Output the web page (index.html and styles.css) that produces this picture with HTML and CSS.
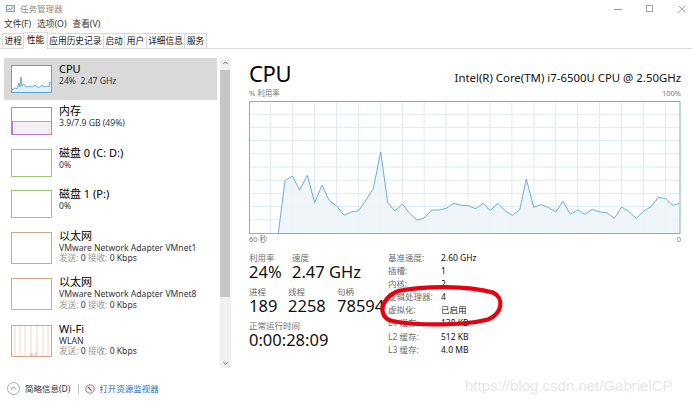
FILE: index.html
```html
<!DOCTYPE html>
<html lang="zh-CN">
<head>
<meta charset="utf-8">
<title>任务管理器</title>
<link rel="stylesheet" href="styles.css">
</head>
<body>
<div class="window">
  <div class="titlebar">
    <svg class="app-icon" viewBox="0 0 9 8"><rect x="0.5" y="0.5" width="8" height="6" fill="#e8eef4" stroke="#8aa0b4"/><path d="M1.5 5 3 3.5 4.5 4.5 7.5 2" fill="none" stroke="#4f86b8" stroke-width="0.9"/></svg>
    <span class="title">任务管理器</span>
    <div class="controls">
      <svg class="ctl min" viewBox="0 0 8 8"><path d="M0 4.5H8" stroke="#9a9a9a" stroke-width="1"/></svg>
      <svg class="ctl max" viewBox="0 0 8 8"><rect x="0.5" y="0.5" width="7" height="7" fill="none" stroke="#9a9a9a"/></svg>
      <svg class="ctl close" viewBox="0 0 8 8"><path d="M0.5 0.5 7.5 7.5M7.5 0.5 0.5 7.5" stroke="#9a9a9a" stroke-width="0.9"/></svg>
    </div>
  </div>

  <div class="menubar">
    <span>文件(F)</span><span>选项(O)</span><span>查看(V)</span>
  </div>

  <div class="tabs">
    <span class="tab">进程</span>
    <span class="tab active">性能</span>
    <span class="tab">应用历史记录</span>
    <span class="tab">启动</span>
    <span class="tab">用户</span>
    <span class="tab">详细信息</span>
    <span class="tab">服务</span>
  </div>

  <div class="main">
    <div class="sidebar">
      <div class="list">
        <div class="item selected">
          <div class="thumb cpu">
            <svg viewBox="0 0 39 26" preserveAspectRatio="none"><polygon points="0,24 3,22 5,23 7,17 8,21 9,11 10,20 12,18 14,21 17,20 20,21 23,19 25,21 28,21 30,19 32,21 35,20 37,21 38,16 39,17 39,26 0,26" fill="#e3eff9"/><polyline points="0,24 3,22 5,23 7,17 8,21 9,11 10,20 12,18 14,21 17,20 20,21 23,19 25,21 28,21 30,19 32,21 35,20 37,21 38,16 39,17" fill="none" stroke="#4a9bd6" stroke-width="0.8"/></svg>
          </div>
          <div class="text"><div class="name">CPU</div><div class="sub">24%&nbsp; 2.47 GHz</div></div>
        </div>
        <div class="item">
          <div class="thumb mem"><div class="mem-fill"></div></div>
          <div class="text"><div class="name">内存</div><div class="sub">3.9/7.9 GB (49%)</div></div>
        </div>
        <div class="item">
          <div class="thumb disk"></div>
          <div class="text"><div class="name">磁盘 0 (C: D:)</div><div class="sub">0%</div></div>
        </div>
        <div class="item">
          <div class="thumb disk"></div>
          <div class="text"><div class="name">磁盘 1 (P:)</div><div class="sub">0%</div></div>
        </div>
        <div class="item tall">
          <div class="thumb eth"></div>
          <div class="text"><div class="name">以太网</div><div class="sub">VMware Network Adapter VMnet1</div><div class="sub"><span class="k">发送:</span> 0 <span class="k">接收:</span> 0 Kbps</div></div>
        </div>
        <div class="item tall">
          <div class="thumb eth"></div>
          <div class="text"><div class="name">以太网</div><div class="sub">VMware Network Adapter VMnet8</div><div class="sub"><span class="k">发送:</span> 0 <span class="k">接收:</span> 0 Kbps</div></div>
        </div>
        <div class="item tall">
          <div class="thumb wifi">
            <svg viewBox="0 0 39 30" preserveAspectRatio="none"><path d="M3 0V30M8 0V30M13 0V30M19 0V30M25 0V30M31 0V30M36 0V30" stroke="#f2cbb8" stroke-width="0.8"/><path d="M19 30V27M21 30V28M24 30V26.5" stroke="#d9a080" stroke-width="0.8"/></svg>
          </div>
          <div class="text"><div class="name">Wi-Fi</div><div class="sub">WLAN</div><div class="sub"><span class="k">发送:</span> 0 <span class="k">接收:</span> 0 Kbps</div></div>
        </div>
        <div class="item">
          <div class="thumb gpu"></div>
          <div class="text"><div class="name">GPU 0</div></div>
        </div>
      </div>
      <div class="scrollbar">
        <svg class="arrow" viewBox="0 0 11 10"><path d="M3.3 6 5.5 3.8 7.7 6" fill="none" stroke="#606060" stroke-width="0.9"/></svg>
        <div class="track"><div class="bar"></div></div>
        <svg class="arrow" viewBox="0 0 11 10"><path d="M3.3 4 5.5 6.2 7.7 4" fill="none" stroke="#606060" stroke-width="0.9"/></svg>
      </div>
    </div>

    <div class="detail">
      <div class="head">
        <div class="big">CPU</div>
        <div class="model">Intel(R) Core(TM) i7-6500U CPU @ 2.50GHz</div>
      </div>
      <div class="axis"><span>% 利用率</span><span>100%</span></div>
      <svg class="chart" width="432" height="133" viewBox="250 101 432 133">
        <path d="M271.7 101V234M293.6 101V234M315.6 101V234M337.5 101V234M359.4 101V234M381.4 101V234M403.3 101V234M425.2 101V234M447.1 101V234M469.1 101V234M491 101V234M512.9 101V234M534.9 101V234M556.8 101V234M578.7 101V234M600.6 101V234M622.6 101V234M644.5 101V234M666.4 101V234M250 114.2H681M250 127.4H681M250 140.6H681M250 153.8H681M250 167H681M250 180.2H681M250 193.4H681M250 206.6H681M250 219.8H681" stroke="#dcebf5" stroke-width="1"/>
        <polygon fill="#eef4f9" fill-opacity="0.9" points="279.3,233.3 286,180.7 293.3,176 300.7,190 308.3,175.3 315.7,202.7 323,185 330.3,200.7 337.7,206 345,215.3 352.3,212 359.7,210.7 367,200 374.3,188.7 381.7,152 388.7,202.7 396,211 403.3,204 410.7,213.3 418,220 425.3,218 432.7,210 440,210 447.3,208.3 454.7,203.3 462,205.3 469.3,205.7 476.7,208.7 484,203.3 491.3,210.7 498.7,203.3 506,210.7 513.3,215.3 520.7,210 527.3,179 534.7,207.3 542,204.7 549.3,207.3 556.7,212 564,201.3 571.3,214.3 578.7,210 586,214.3 593.3,209.3 600.7,212 608,212.7 615.3,218.3 622.7,207 630,211.7 637.3,218.3 644.7,211 652,206.7 659.3,197.3 666.7,198.7 674,205.3 680.7,203.3 680.7,233 279.3,233"/>
        <polyline fill="none" stroke="#5aa6da" stroke-width="0.9" points="279.3,233.3 286,180.7 293.3,176 300.7,190 308.3,175.3 315.7,202.7 323,185 330.3,200.7 337.7,206 345,215.3 352.3,212 359.7,210.7 367,200 374.3,188.7 381.7,152 388.7,202.7 396,211 403.3,204 410.7,213.3 418,220 425.3,218 432.7,210 440,210 447.3,208.3 454.7,203.3 462,205.3 469.3,205.7 476.7,208.7 484,203.3 491.3,210.7 498.7,203.3 506,210.7 513.3,215.3 520.7,210 527.3,179 534.7,207.3 542,204.7 549.3,207.3 556.7,212 564,201.3 571.3,214.3 578.7,210 586,214.3 593.3,209.3 600.7,212 608,212.7 615.3,218.3 622.7,207 630,211.7 637.3,218.3 644.7,211 652,206.7 659.3,197.3 666.7,198.7 674,205.3 680.7,203.3"/>
        <rect x="250.5" y="101.5" width="430.5" height="132" fill="none" stroke="#74b1de" stroke-width="1"/>
      </svg>
      <div class="axis bottom"><span>60 秒</span><span>0</span></div>

      <div class="stats">
        <div class="left-stats">
          <div class="srow">
            <div class="stat c1"><div class="lbl">利用率</div><div class="val">24%</div></div>
            <div class="stat"><div class="lbl">速度</div><div class="val">2.47 GHz</div></div>
          </div>
          <div class="srow">
            <div class="stat c2"><div class="lbl">进程</div><div class="val">189</div></div>
            <div class="stat c3"><div class="lbl">线程</div><div class="val">2258</div></div>
            <div class="stat"><div class="lbl">句柄</div><div class="val">78594</div></div>
          </div>
          <div class="srow">
            <div class="stat"><div class="lbl">正常运行时间</div><div class="val">0:00:28:09</div></div>
          </div>
        </div>
        <div class="spec">
          <span class="sk">基准速度:</span><span class="sv">2.60 GHz</span>
          <span class="sk">插槽:</span><span class="sv">1</span>
          <span class="sk">内核:</span><span class="sv">2</span>
          <span class="sk">逻辑处理器:</span><span class="sv">4</span>
          <span class="sk">虚拟化:</span><span class="sv">已启用</span>
          <span class="sk">L1 缓存:</span><span class="sv">128 KB</span>
          <span class="sk">L2 缓存:</span><span class="sv">512 KB</span>
          <span class="sk">L3 缓存:</span><span class="sv">4.0 MB</span>
        </div>
      </div>
    </div>
  </div>

  <div class="footer">
    <svg class="fold" viewBox="0 0 13 13"><circle cx="6.5" cy="6.5" r="6" fill="none" stroke="#a0a0a0" stroke-width="0.9"/><path d="M3.9 7.6 6.5 5 9.1 7.6" fill="none" stroke="#808080" stroke-width="0.9"/></svg>
    <span class="brief">简略信息(D)</span>
    <span class="sep"></span>
    <svg class="monitor" viewBox="0 0 10 10"><circle cx="5" cy="5" r="4.3" fill="#e6e6e6" stroke="#8a8a8a" stroke-width="0.9"/><circle cx="5" cy="5" r="2.6" fill="#fafafa"/><path d="M3 3 6.6 6.6" stroke="#d0302a" stroke-width="1.1"/></svg>
    <span class="link">打开资源监视器</span>
  </div>

  <svg class="annot" width="692" height="403" viewBox="0 0 692 403">
    <path d="M398 291 C425 285.5 468 285.5 493 292.5 C504 297.5 503 313 488 319.5 C462 326 418 325.5 394 321.5 C380 319 380.5 306 386.5 299.5 C389 296 392 293.5 397 291.5" fill="none" stroke="#e80010" stroke-width="4.2" stroke-linecap="round"/>
  </svg>
  <div class="watermark">https://blog.csdn.net/GabrielCP</div>
</div>
</body>
</html>
```

FILE: styles.css
```css
* {
  box-sizing: border-box;
  margin: 0;
  padding: 0;
}

html, body {
  width: 692px;
  height: 403px;
  overflow: hidden;
  background: #fff;
}

body {
  font-family: "Noto Sans", "Noto Sans CJK SC", sans-serif;
  color: #000;
}

.window {
  position: relative;
  width: 692px;
  height: 403px;
}

/* title bar */
.titlebar {
  height: 17px;
  display: flex;
  align-items: center;
  padding-left: 6px;
}

.app-icon {
  width: 9px;
  height: 8px;
  margin-right: 5px;
}

.title {
  font-size: 8.5px;
  line-height: 17px;
  color: #8c8c8c;
}

.controls {
  margin-left: auto;
  display: flex;
  align-items: center;
  padding-right: 6px;
}

.ctl {
  display: block;
  width: 8px;
  height: 8px;
}

.ctl.min { margin-right: 24px; }
.ctl.max { width: 7px; height: 7px; margin-right: 25px; }

/* menu */
.menubar {
  height: 15px;
  display: flex;
  gap: 6px;
  padding-left: 4px;
  font-size: 8.7px;
  line-height: 15px;
  color: #333;
}

/* tabs */
.tabs {
  height: 17px;
  display: flex;
  align-items: flex-end;
  padding-left: 2px;
  border-bottom: 1px solid #dadada;
}

.tab {
  height: 15px;
  padding: 0 1.5px;
  margin-right: -1px;
  border: 1px solid #dadada;
  border-bottom: none;
  background: #fff;
  font-size: 8.7px;
  line-height: 14px;
  color: #111;
  position: relative;
}

.tab.active {
  height: 17px;
  margin-bottom: -1px;
  padding: 0 2.5px;
  line-height: 15px;
  z-index: 1;
}

/* main */
.main {
  height: 323px;
  display: flex;
}

.sidebar {
  width: 240px;
  display: flex;
  padding-top: 9px;
}

.list {
  width: 213px;
  height: 312px;
  margin-left: 4px;
  overflow: hidden;
}

.item {
  height: 41.5px;
  display: flex;
  padding-top: 4px;
}

.item:first-child {
  height: 42px;
}

.item.tall {
  height: 46.5px;
}

.item.selected {
  background: #d9d9d9;
}

.thumb {
  width: 41px;
  height: 28px;
  margin: 3px 7px 0 7px;
  border: 1px solid #ccc;
  background: #fff;
  flex: none;
  position: relative;
  overflow: hidden;
}

.tall .thumb {
  height: 32px;
}

.thumb svg {
  display: block;
  width: 100%;
  height: 100%;
}

.thumb.cpu { border-color: #5aa4da; }
.thumb.mem { border-color: #c07ad6; }
.thumb.disk { border-color: #95cb74; }
.thumb.eth { border-color: #d6a582; }
.thumb.wifi { border-color: #dba283; }
.thumb.gpu { border-color: #5aa4da; }

.mem-fill {
  position: absolute;
  left: 0;
  right: 0;
  bottom: 0;
  height: 13px;
  background: #f2eef4;
  border-top: 1px solid #c79bd9;
  border-left: 1px solid #c07ad6;
}

.text {
  min-width: 0;
  white-space: nowrap;
}

.name {
  font-size: 11px;
  line-height: 14px;
  color: #000;
}

.sub {
  font-size: 8.6px;
  line-height: 10.5px;
  color: #333;
}

.k {
  color: #9a9a9a;
}

.scrollbar {
  width: 11px;
  height: 310px;
  margin-left: 3px;
  background: #f0f0f0;
  display: flex;
  flex-direction: column;
}

.arrow {
  display: block;
  width: 11px;
  height: 10px;
  flex: none;
}

.track {
  flex: 1;
  padding: 2px 1px 0 0;
}

.bar {
  height: 227px;
  background: #c6c6c6;
}

/* detail */
.detail {
  flex: 1;
  padding: 11px 11px 0 10px;
}

.head {
  height: 26px;
  display: flex;
  align-items: baseline;
  justify-content: space-between;
}

.big {
  font-size: 22px;
  line-height: 26px;
  letter-spacing: -0.3px;
}

.model {
  font-size: 11.4px;
  line-height: 26px;
  color: #111;
}

.axis {
  height: 10px;
  margin-top: 2px;
  display: flex;
  justify-content: space-between;
  font-size: 7.5px;
  line-height: 10px;
  color: #7a7a7a;
}

.chart {
  display: block;
  margin-top: 3px;
}

.axis.bottom {
  margin-top: 0;
}

.stats {
  display: flex;
  margin-top: 7px;
}

.left-stats {
  width: 139px;
  padding-top: 2px;
}

.srow {
  display: flex;
  margin-bottom: 7px;
}

.stat.c1 { width: 43px; }
.stat.c2 { width: 39px; }
.stat.c3 { width: 49px; }

.lbl {
  font-size: 8.5px;
  line-height: 10px;
  color: #6e6e6e;
}

.val {
  font-size: 16.5px;
  line-height: 17px;
  color: #111;
  white-space: nowrap;
}

.spec {
  display: grid;
  grid-template-columns: 53px auto;
  font-size: 8.5px;
  line-height: 13.1px;
}

.sk {
  color: #6e6e6e;
}

.sv {
  color: #111;
}

/* footer */
.footer {
  height: 31px;
  display: flex;
  align-items: center;
  padding: 2px 0 0 7px;
  font-size: 8.5px;
  line-height: 12px;
}

.fold {
  width: 13px;
  height: 13px;
  margin-right: 5px;
}

.brief {
  color: #333;
}

.sep {
  width: 1px;
  height: 10px;
  background: #c8c8c8;
  margin: 0 6px 0 8px;
}

.monitor {
  width: 10px;
  height: 10px;
  margin-right: 4px;
}

.link {
  color: #1e6fd0;
}

/* overlays */
.annot {
  position: absolute;
  left: 0;
  top: 0;
  pointer-events: none;
}

.watermark {
  position: absolute;
  left: 465px;
  top: 378px;
  font-family: "Liberation Sans", Arial, sans-serif;
  font-size: 15px;
  line-height: 15px;
  color: #e6e6e6;
}
```
